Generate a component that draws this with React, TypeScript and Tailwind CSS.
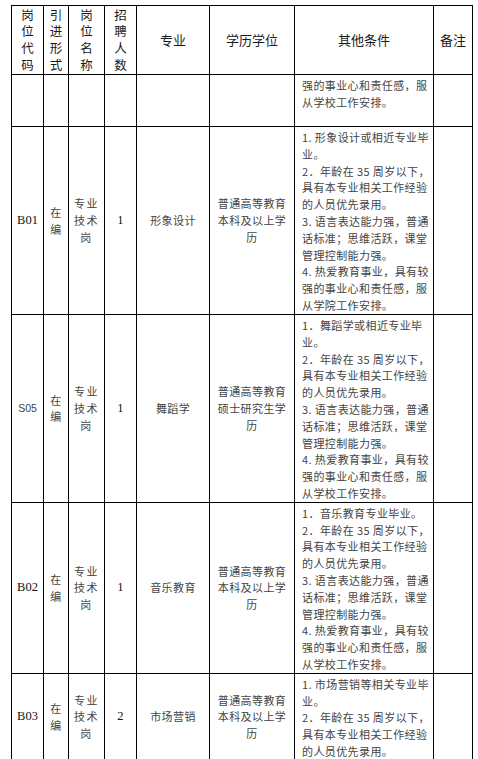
import React from 'react';

interface Row {
  code: string[];
  codeFont?: 'serif' | 'sans';
  kind: string[];
  post: string[];
  count: string;
  major: string[];
  degree: string[];
  terms: string[];
  height: string;
}

const baseTerms = [
  '2．年龄在 35 周岁以下，',
  '具有本专业相关工作经验',
  '的人员优先录用。',
  '3. 语言表达能力强，普通',
  '话标准；思维活跃，课堂',
  '管理控制能力强。',
  '4. 热爱教育事业，具有较',
  '强的事业心和责任感，服',
];

const rows: Row[] = [
  {
    code: [],
    kind: [],
    post: [],
    count: '',
    major: [],
    degree: [],
    terms: ['强的事业心和责任感，服', '从学校工作安排。'],
    height: 'h-[52px]',
  },
  {
    code: ['B01'],
    kind: ['在', '编'],
    post: ['专业', '技术', '岗'],
    count: '1',
    major: ['形象设计'],
    degree: ['普通高等教育', '本科及以上学', '历'],
    terms: ['1. 形象设计或相近专业毕', '业。', ...baseTerms, '从学院工作安排。'],
    height: 'h-[188px]',
  },
  {
    code: ['S05'],
    codeFont: 'sans',
    kind: ['在', '编'],
    post: ['专业', '技术', '岗'],
    count: '1',
    major: ['舞蹈学'],
    degree: ['普通高等教育', '硕士研究生学', '历'],
    terms: ['1．舞蹈学或相近专业毕', '业。', ...baseTerms, '从学校工作安排。'],
    height: 'h-[187px]',
  },
  {
    code: ['B02'],
    kind: ['在', '编'],
    post: ['专业', '技术', '岗'],
    count: '1',
    major: ['音乐教育'],
    degree: ['普通高等教育', '本科及以上学', '历'],
    terms: ['1．音乐教育专业毕业。', ...baseTerms, '从学校工作安排。'],
    height: 'h-[170px]',
  },
  {
    code: ['B03'],
    kind: ['在', '编'],
    post: ['专业', '技术', '岗'],
    count: '2',
    major: ['市场营销'],
    degree: ['普通高等教育', '本科及以上学', '历'],
    terms: ['1. 市场营销等相关专业毕', '业。', '2．年龄在 35 周岁以下，', '具有本专业相关工作经验', '的人员优先录用。'],
    height: 'h-[86px]',
  },
];

// narrow header columns stack one character per line
const headers: { text: string; vertical?: boolean }[] = [
  { text: '岗位代码', vertical: true },
  { text: '引进形式', vertical: true },
  { text: '岗位名称', vertical: true },
  { text: '招聘人数', vertical: true },
  { text: '专业' },
  { text: '学历学位' },
  { text: '其他条件' },
  { text: '备注' },
];

const cell = 'border border-black p-0 text-center align-middle';

function Lines({ lines }: { lines: string[] }) {
  return (
    <>
      {lines.map((l, i) => (
        <div key={i} className="whitespace-pre">
          {l}
        </div>
      ))}
    </>
  );
}

export default function App() {
  return (
    <div className="min-h-screen bg-white pt-[5px] pl-[11px] font-['Noto_Sans_CJK_SC',sans-serif]">
      <table className="table-fixed border-collapse w-[462px]">
        <colgroup>
          <col className="w-[32px]" />
          <col className="w-[25px]" />
          <col className="w-[36px]" />
          <col className="w-[32px]" />
          <col className="w-[73px]" />
          <col className="w-[85px]" />
          <col className="w-[139px]" />
          <col className="w-[39px]" />
        </colgroup>
        <thead>
          <tr className="h-[69px]">
            {headers.map((h, i) => (
              <th key={i} className={`${cell} font-normal text-[13px] leading-[16.7px] text-[#1a1a1a]`}>
                {h.vertical ? (
                  <div className="mx-auto w-[13px] break-all text-[12.5px]">{h.text}</div>
                ) : (
                  h.text
                )}
              </th>
            ))}
          </tr>
        </thead>
        <tbody className="text-[11px] leading-[16.8px] tracking-[0.4px] text-[#444]">
          {rows.map((r, i) => (
            <tr key={i} className={r.height}>
              <td
                className={`${cell} ${
                  r.codeFont === 'sans'
                    ? "font-['Liberation_Sans',sans-serif] text-[10.5px] tracking-normal"
                    : "font-['Liberation_Serif',serif] text-[12.5px] tracking-normal text-[#111]"
                }`}
              >
                <Lines lines={r.code} />
              </td>
              <td className={cell}>
                <Lines lines={r.kind} />
              </td>
              <td className={`${cell} tracking-[1.5px]`}>
                <Lines lines={r.post} />
              </td>
              <td className={`${cell} font-['Liberation_Serif',serif] text-[12.5px] text-[#111]`}>{r.count}</td>
              <td className={cell}>
                <Lines lines={r.major} />
              </td>
              <td className={cell}>
                <Lines lines={r.degree} />
              </td>
              <td className="border border-black p-0 pl-[7px] pt-[2px] text-left align-top">
                <Lines lines={r.terms} />
              </td>
              <td className={cell} />
            </tr>
          ))}
        </tbody>
      </table>
    </div>
  );
}
